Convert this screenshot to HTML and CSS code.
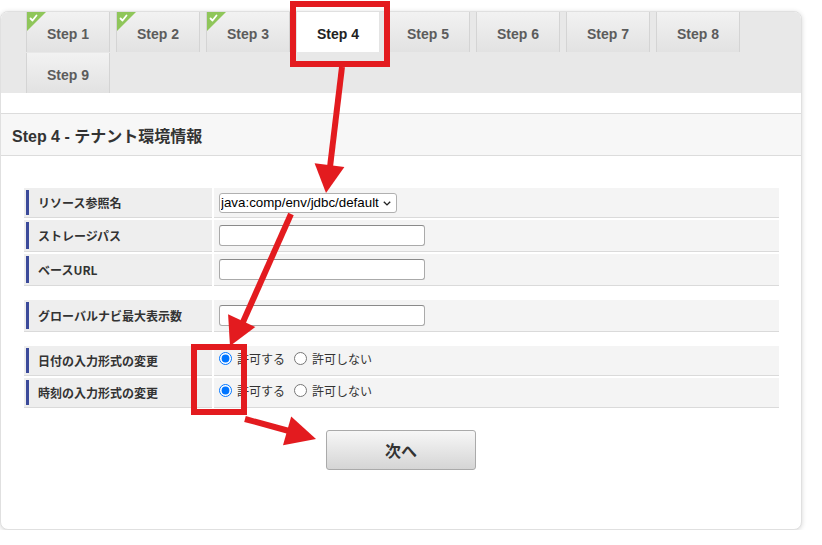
FILE: index.html
```html
<!DOCTYPE html>
<html lang="ja">
<head>
<meta charset="utf-8">
<title>Step 4 - テナント環境情報</title>
<link rel="stylesheet" href="styles.css">
</head>
<body>
<div class="page">
  <div class="card">
    <div class="tabs">
      <div class="tab done">Step 1<svg class="badge" viewBox="0 0 19 19"><polygon points="0,0 19,0 0,19" fill="#8fc65a"/><path d="M3.5 6.5 L5.5 8.5 L9.5 3.5" fill="none" stroke="#fff" stroke-width="1.8" stroke-linecap="round" stroke-linejoin="round"/></svg></div>
      <div class="tab done">Step 2<svg class="badge" viewBox="0 0 19 19"><polygon points="0,0 19,0 0,19" fill="#8fc65a"/><path d="M3.5 6.5 L5.5 8.5 L9.5 3.5" fill="none" stroke="#fff" stroke-width="1.8" stroke-linecap="round" stroke-linejoin="round"/></svg></div>
      <div class="tab done">Step 3<svg class="badge" viewBox="0 0 19 19"><polygon points="0,0 19,0 0,19" fill="#8fc65a"/><path d="M3.5 6.5 L5.5 8.5 L9.5 3.5" fill="none" stroke="#fff" stroke-width="1.8" stroke-linecap="round" stroke-linejoin="round"/></svg></div>
      <div class="tab active">Step 4</div>
      <div class="tab">Step 5</div>
      <div class="tab">Step 6</div>
      <div class="tab">Step 7</div>
      <div class="tab">Step 8</div>
      <div class="tab">Step 9</div>
    </div>

    <div class="heading">Step 4 - テナント環境情報</div>

    <div class="form">
      <div class="group group-a">
        <div class="label"><span>リソース参照名</span></div>
        <div class="value">
          <span class="select-wrap">
            <select class="select"><option>java:comp/env/jdbc/default</option></select>
            <svg class="chevron" viewBox="0 0 8 5" width="8" height="5"><path d="M0.8 0.8 L4 3.9 L7.2 0.8" fill="none" stroke="#222" stroke-width="1.4"/></svg>
          </span>
        </div>
        <div class="label"><span>ストレージパス</span></div>
        <div class="value"><input class="text" type="text"></div>
        <div class="label"><span>ベースURL</span></div>
        <div class="value"><input class="text" type="text"></div>
      </div>

      <div class="group group-b">
        <div class="label"><span>グローバルナビ最大表示数</span></div>
        <div class="value"><input class="text" type="text"></div>
      </div>

      <div class="group group-c">
        <div class="label"><span>日付の入力形式の変更</span></div>
        <div class="value radios">
          <label class="opt"><input type="radio" name="date" checked>許可する</label>
          <label class="opt"><input type="radio" name="date">許可しない</label>
        </div>
        <div class="label"><span>時刻の入力形式の変更</span></div>
        <div class="value radios">
          <label class="opt"><input type="radio" name="time" checked>許可する</label>
          <label class="opt"><input type="radio" name="time">許可しない</label>
        </div>
      </div>
    </div>

    <div class="actions"><button class="next" type="button">次へ</button></div>
  </div>
</div>

<svg class="annot" width="822" height="545" viewBox="0 0 822 545">
  <g fill="#e31b1f" stroke="#e31b1f">
    <rect x="293" y="4" width="94" height="60" fill="none" stroke-width="6"/>
    <rect x="194" y="347" width="50" height="65" fill="none" stroke-width="6"/>
    <line x1="342" y1="67" x2="330" y2="167" stroke-width="6"/>
    <polygon points="326,193 344.4,167.1 314.6,163.3" stroke="none"/>
    <line x1="291" y1="214" x2="243" y2="322" stroke-width="6"/>
    <polygon points="230,346 255.3,326.9 228.1,314.3" stroke="none"/>
    <line x1="245" y1="419" x2="289" y2="431" stroke-width="6"/>
    <polygon points="316,439 283,445.3 291.2,416.5" stroke="none"/>
  </g>
</svg>
</body>
</html>
```

FILE: styles.css
```css
body {
  margin: 0;
  background: #fff;
  font-family: "Liberation Sans", "Noto Sans CJK JP", sans-serif;
  color: #333;
}

.page {
  padding-top: 11px;
}

.card {
  width: 802px;
  height: 519px;
  box-sizing: border-box;
  border: 1px solid #e0e0e0;
  border-radius: 8px;
  box-shadow: 0 1px 5px rgba(0, 0, 0, 0.16);
  overflow: hidden;
  background: #fff;
}

/* tabs */
.tabs {
  height: 81px;
  box-sizing: border-box;
  background: #e8e8e8;
  padding-left: 25px;
  display: flex;
  flex-wrap: wrap;
  align-content: flex-start;
  column-gap: 6px;
  row-gap: 1px;
}

.tab {
  position: relative;
  width: 84px;
  height: 40px;
  box-sizing: border-box;
  border-left: 1px solid #d4d4d4;
  border-right: 1px solid #d4d4d4;
  background: linear-gradient(#f2f2f2, #e2e2e2);
  display: flex;
  align-items: center;
  justify-content: center;
  padding-top: 3px;
  font: bold 14px "Liberation Sans", sans-serif;
  color: #5c5c5c;
}

.tab.active {
  background: #fff;
  border-color: #e4e4e4;
  color: #222;
}

.badge {
  position: absolute;
  left: 0;
  top: 0;
  width: 19px;
  height: 19px;
}

/* heading */
.heading {
  margin-top: 20px;
  height: 43px;
  box-sizing: border-box;
  border-top: 1px solid #dcdcdc;
  border-bottom: 1px solid #dcdcdc;
  background: #f7f7f7;
  padding-left: 11px;
  display: flex;
  align-items: center;
  font: bold 16px "Liberation Sans", "Noto Sans CJK JP", sans-serif;
  color: #333;
}

/* form */
.form {
  padding: 32px 22px 0 23px;
}

.group {
  display: grid;
  grid-template-columns: 188px 1fr;
  gap: 2px;
}

.group + .group {
  margin-top: 14px;
}

.group-a { grid-template-rows: 30px 32px 32px; }
.group-b { grid-template-rows: 32px; }
.group-c { grid-template-rows: 30px 30px; }

.label,
.value {
  box-sizing: border-box;
  border-bottom: 1px solid #dadada;
}

.label {
  background: #eeeeee;
  padding: 2px 0 2px 2px;
  display: flex;
}

.label span {
  flex: 1;
  display: flex;
  align-items: center;
  border-left: 3px solid #3b4a9a;
  padding-left: 9px;
  font: bold 12px/1 "Noto Sans CJK JP", sans-serif;
  color: #333;
}

.value {
  background: #f4f4f4;
  padding-left: 5px;
  display: flex;
  align-items: center;
}

.select-wrap {
  position: relative;
  display: inline-flex;
}

.select {
  -webkit-appearance: none;
  appearance: none;
  width: 178px;
  height: 20px;
  box-sizing: border-box;
  margin: 0;
  padding: 0 16px 0 1px;
  font: 13.33px "Liberation Sans", sans-serif;
  color: #000;
  background: #fff;
  border: 1px solid #b0b0b0;
  border-radius: 3px;
}

.chevron {
  position: absolute;
  right: 6px;
  top: 8px;
}

.text {
  width: 206px;
  height: 21px;
  box-sizing: border-box;
  margin: 0;
  border: 1px solid #aaaaaa;
  border-top-color: #8a8a8a;
  border-radius: 3px;
  background: #fff;
  padding: 0 3px;
}

.radios {
  padding-bottom: 4px;
}

.opt {
  display: flex;
  align-items: center;
  font: 12px/1 "Noto Sans CJK JP", sans-serif;
  color: #333;
}

.opt + .opt {
  margin-left: 9px;
}

.opt input {
  width: 13px;
  height: 13px;
  margin: 0 5px 0 0;
}

/* actions */
.actions {
  display: flex;
  justify-content: center;
  padding-top: 22px;
}

.next {
  width: 150px;
  height: 40px;
  border: 1px solid #aaaaaa;
  border-radius: 3px;
  background: linear-gradient(#f7f7f7, #d5d5d5);
  font: bold 16px "Noto Sans CJK JP", sans-serif;
  color: #333;
  padding: 0;
}

/* annotations */
.annot {
  position: absolute;
  left: 0;
  top: 0;
  pointer-events: none;
}
```
